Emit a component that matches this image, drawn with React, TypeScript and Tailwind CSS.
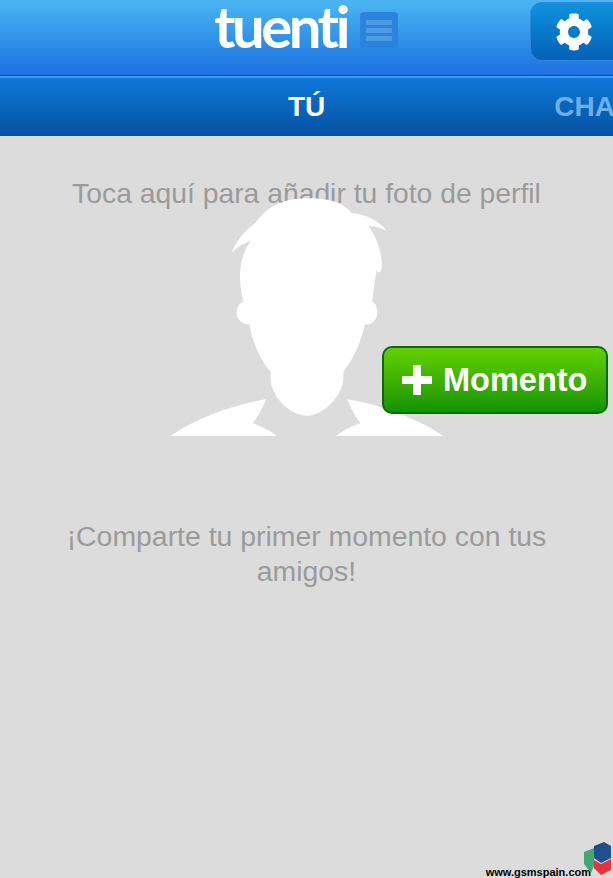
import { FaCog } from "react-icons/fa";

function Avatar() {
  return (
    <svg viewBox="0 0 900 765" className="block w-[300px] h-[255px]" fill="#ffffff">
      <path d="M215 188C225 160 250 125 285 100C320 50 370 25 440 25C490 25 545 30 575 70C610 70 655 90 680 122C660 112 640 108 625 108C650 140 668 190 665 235C662 250 652 250 650 240C645 270 640 300 637 335C650 340 652 358 652 370C650 395 630 405 615 403C605 450 580 510 550 545L550 570C545 620 490 677 440 677C390 677 335 620 332 570L332 545C300 510 275 450 268 403C250 405 230 390 230 368C230 350 240 338 250 335C242 300 240 280 240 260C240 220 250 180 273 152C250 160 230 172 215 188Z" />
      <path d="M30 738C100 690 210 645 318 628C310 650 295 680 278 700C300 708 330 722 350 738Z" />
      <path d="M850 738C790 695 670 645 562 628C570 650 585 680 602 700C575 708 550 722 528 738Z" />
    </svg>
  );
}

function Cubes() {
  return (
    <svg viewBox="0 0 28 34" className="w-[28px] h-[34px]">
      <path d="M0 10L10 6V24L7 31L0 22Z" fill="#3fa873" />
      <path d="M10 4L20 0L27 4V16L17 21L10 16Z" fill="#1f4f8f" />
      <path d="M10 18L17 22L27 17V28L17 33L10 26Z" fill="#e8333c" />
    </svg>
  );
}

export default function App() {
  return (
    <div className="relative w-[613px] h-[878px] overflow-hidden bg-[#dcdcdc] font-['Liberation_Sans',Arial,sans-serif]">
      {/* top bar */}
      <div className="flex h-[75px] items-start bg-gradient-to-b from-[#4cb6f3] to-[#1c70e0] pl-[214px]">
        <span className="text-[58px] leading-[52px] font-['Lato',sans-serif] font-bold tracking-[-3.5px] text-white">
          tuenti
        </span>
        <div className="ml-[13px] mt-[12px] flex h-[36px] w-[38px] flex-col justify-center gap-[3px] rounded-[4px] bg-[#2a84dc] px-[6px]">
          <div className="h-[5px] rounded-[1px] bg-[#4d9be2]" />
          <div className="h-[5px] rounded-[1px] bg-[#4d9be2]" />
          <div className="h-[5px] rounded-[1px] bg-[#4d9be2]" />
        </div>
        <div className="ml-auto mr-[-12px] mt-[2px] flex h-[59px] w-[95px] items-center rounded-[12px] border border-[#2f86dc] bg-gradient-to-b from-[#0f93dc] to-[#0560b6] pl-[24px]">
          <FaCog className="h-[38px] w-[38px] text-white" />
        </div>
      </div>
      <div className="h-[1px] bg-[#0a4f9e]" />
      <div className="h-[2px] bg-[#3f9cf0]" />

      {/* tabs */}
      <div className="flex h-[58px] items-center gap-[229px] overflow-hidden border-b border-[#034a8e] bg-gradient-to-b from-[#0f78dc] to-[#04529f] pl-[288px] text-[28px] font-bold whitespace-nowrap">
        <span className="text-white">TÚ</span>
        <span className="text-[#6bb0ea]">CHA</span>
      </div>

      {/* empty profile */}
      <div className="flex flex-col items-center pt-[41px]">
        <p className="text-[28.3px] leading-[32px] text-[#9b9b9b]">Toca aquí para añadir tu foto de perfil</p>
        <div className="mt-[-19px] ml-[7px]">
          <Avatar />
        </div>
        <p className="mt-[74px] w-[520px] text-center text-[28.4px] leading-[35px] text-[#9b9b9b]">
          ¡Comparte tu primer momento con tus amigos!
        </p>
      </div>

      {/* momento button */}
      <div className="absolute left-[382px] top-[346px] flex h-[68px] w-[226px] items-center rounded-[10px] border-2 border-[#0b6b0b] bg-gradient-to-b from-[#62d000] to-[#0b9400] pl-[18px]">
        <svg viewBox="0 0 30 30" className="h-[30px] w-[30px]" fill="#ffffff">
          <path d="M11 0H19V11H30V19H19V30H11V19H0V11H11Z" />
        </svg>
        <span className="ml-[11px] text-[32.5px] font-bold text-white">Momento</span>
      </div>

      {/* watermark */}
      <div className="absolute bottom-[2px] right-[1px] flex items-end">
        <span className="mb-[-2px] text-[11px] leading-[12px] font-bold text-black">www.gsmspain.com</span>
        <div className="ml-[-7px]">
          <Cubes />
        </div>
      </div>
    </div>
  );
}
